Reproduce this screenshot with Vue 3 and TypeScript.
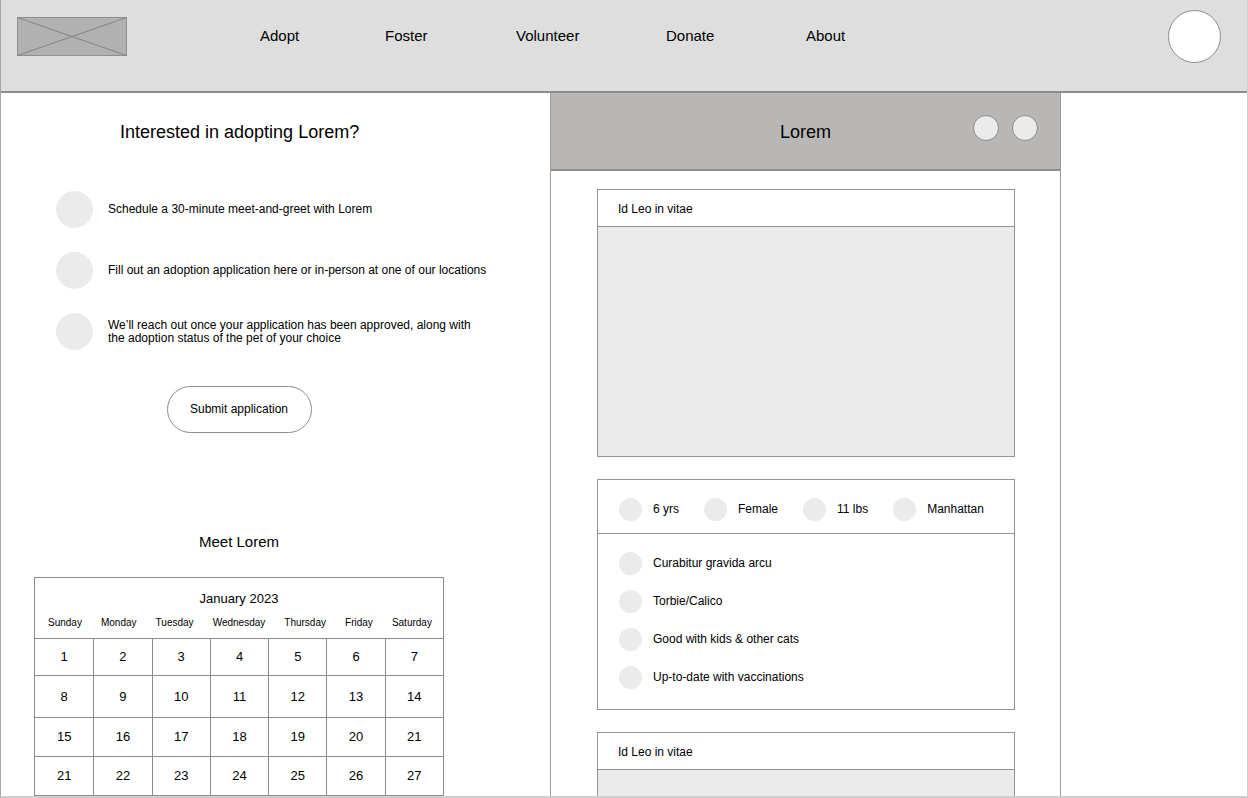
<script setup lang="ts">
interface Step {
  id: number
  text: string
}

interface Week {
  size: string
  days: number[]
}

const links: string[] = ['Adopt', 'Foster', 'Volunteer', 'Donate', 'About']

const steps: Step[] = [
  { id: 1, text: 'Schedule a 30-minute meet-and-greet with Lorem' },
  { id: 2, text: 'Fill out an adoption application here or in-person at one of our locations' },
  {
    id: 3,
    text: 'We’ll reach out once your application has been approved, along with\nthe adoption status of the pet of your choice',
  },
]

const weekdays: string[] = ['Sunday', 'Monday', 'Tuesday', 'Wednesday', 'Thursday', 'Friday', 'Saturday']

const weeks: Week[] = [
  { size: 'short', days: [1, 2, 3, 4, 5, 6, 7] },
  { size: 'tall', days: [8, 9, 10, 11, 12, 13, 14] },
  { size: 'medium', days: [15, 16, 17, 18, 19, 20, 21] },
  { size: 'medium', days: [21, 22, 23, 24, 25, 26, 27] },
  { size: 'medium', days: [] },
]

const facts: string[] = ['6 yrs', 'Female', '11 lbs', 'Manhattan']

const traits: string[] = [
  'Curabitur gravida arcu',
  'Torbie/Calico',
  'Good with kids & other cats',
  'Up-to-date with vaccinations',
]
</script>

<template>
  <div class="page">
    <header class="topbar">
      <a href="#" class="logo" aria-label="Home">
        <svg viewBox="0 0 110 39" preserveAspectRatio="none" aria-hidden="true">
          <rect x="0.5" y="0.5" width="109" height="38" fill="#b1b1b1" stroke="#8f8f8f" />
          <path d="M0.5 0.5L109.5 38.5M0.5 38.5L109.5 0.5" fill="none" stroke="#858585" />
        </svg>
      </a>
      <nav class="links" aria-label="Main">
        <a v-for="link in links" :key="link" href="#">{{ link }}</a>
      </nav>
      <button type="button" class="avatar" aria-label="Account"></button>
    </header>

    <main class="columns">
      <section class="adopt">
        <h1>Interested in adopting Lorem?</h1>
        <ol class="steps">
          <li v-for="step in steps" :key="step.id">
            <span class="dot"></span>
            <span class="step-text">{{ step.text }}</span>
          </li>
        </ol>
        <div class="booking">
          <button type="button" class="submit">Submit application</button>
          <h2>Meet Lorem</h2>
          <table class="calendar">
            <caption>January 2023</caption>
            <thead>
              <tr>
                <th v-for="name in weekdays" :key="name" scope="col">{{ name }}</th>
              </tr>
            </thead>
            <tbody>
              <tr v-for="(week, w) in weeks" :key="w" :class="week.size">
                <td v-for="col in 7" :key="col">{{ week.days[col - 1] }}</td>
              </tr>
            </tbody>
          </table>
        </div>
      </section>

      <section class="profile">
        <header class="profile-head">
          <h2>Lorem</h2>
          <div class="actions">
            <button type="button" aria-label="Save"></button>
            <button type="button" aria-label="Share"></button>
          </div>
        </header>
        <div class="cards">
          <article class="card">
            <h3>Id Leo in vitae</h3>
            <div class="media"></div>
          </article>
          <article class="card">
            <ul class="facts">
              <li v-for="fact in facts" :key="fact"><span class="bullet"></span>{{ fact }}</li>
            </ul>
            <ul class="traits">
              <li v-for="trait in traits" :key="trait"><span class="bullet"></span>{{ trait }}</li>
            </ul>
          </article>
          <article class="card">
            <h3>Id Leo in vitae</h3>
            <div class="media"></div>
          </article>
        </div>
      </section>
    </main>
  </div>
</template>

<style>
body {
  margin: 0;
}
</style>

<style scoped>
.page {
  box-sizing: border-box;
  height: 100vh;
  display: flex;
  flex-direction: column;
  overflow: hidden;
  background: #fff;
  color: #000;
  border-left: 1px solid #a6a6a6;
  border-right: 1px solid #cfcfcf;
  border-bottom: 2px solid #cfcfcf;
  font: 12px/13px "Liberation Sans", Arial, sans-serif;
}

h1,
h2,
h3,
ul,
ol {
  margin: 0;
  padding: 0;
  font-weight: 400;
  list-style: none;
}

button {
  box-sizing: border-box;
  padding: 0;
  font: inherit;
  color: inherit;
  border: 1px solid #8c8c8c;
}

.topbar {
  flex: none;
  box-sizing: border-box;
  height: 93px;
  display: flex;
  align-items: flex-start;
  padding: 10px 26px 0 16px;
  background: #dedede;
  border-bottom: 2px solid #8c8c8c;
}

.logo {
  width: 110px;
  height: 39px;
  margin-top: 7px;
}

.logo svg {
  display: block;
  width: 100%;
  height: 100%;
}

.links {
  flex: 1;
  display: grid;
  grid-template-columns: 125px 131px 150px 140px auto;
  margin: 16px 0 0 133px;
}

.links a {
  justify-self: start;
  color: inherit;
  font-size: 15px;
  line-height: 20px;
  text-decoration: none;
}

.avatar {
  width: 53px;
  height: 53px;
  border-radius: 50%;
  background: #fff;
}

.columns {
  flex: 1;
  min-height: 0;
  display: grid;
  grid-template-columns: 549fr 511fr 186fr;
}

.adopt {
  min-width: 0;
  padding-left: 33px;
}

.adopt h1 {
  margin: 28px 0 0 86px;
  font-size: 18px;
  line-height: 22px;
}

.steps {
  display: grid;
  gap: 24px;
  margin: 48px 0 0 22px;
}

.steps li {
  display: flex;
  align-items: center;
  gap: 15px;
}

.dot {
  flex: none;
  width: 37px;
  height: 37px;
  border-radius: 50%;
  background: #ebebeb;
}

.step-text {
  white-space: pre-line;
}

.booking {
  width: 410px;
  max-width: 100%;
  display: flex;
  flex-direction: column;
  align-items: center;
}

.submit {
  width: 145px;
  height: 47px;
  margin-top: 36px;
  border-radius: 24px;
  background: #fff;
}

.booking h2 {
  margin-top: 99px;
  font-size: 15px;
  line-height: 20px;
}

.calendar {
  box-sizing: border-box;
  display: block;
  width: 100%;
  margin-top: 25px;
  border: 1px solid #8c8c8c;
}

.calendar caption {
  display: block;
  padding-top: 12px;
  font-size: 13px;
  line-height: 18px;
}

.calendar thead,
.calendar tbody {
  display: block;
}

.calendar thead tr {
  display: flex;
  justify-content: space-between;
  padding: 8px 11px 9px 13px;
}

.calendar th {
  padding: 0;
  font-size: 10px;
  line-height: 13px;
  font-weight: 400;
}

.calendar tbody tr {
  display: grid;
  grid-template-columns: repeat(7, 1fr);
  border-top: 1px solid #8c8c8c;
}

.calendar td {
  display: flex;
  align-items: center;
  justify-content: center;
  padding: 0;
  font-size: 13px;
  line-height: 18px;
}

.calendar td + td {
  border-left: 1px solid #8c8c8c;
}

.short td {
  height: 36px;
}

.medium td {
  height: 38px;
}

.tall td {
  height: 41px;
}

.profile {
  min-width: 0;
  border-left: 1px solid #9c9c9c;
  border-right: 1px solid #9c9c9c;
}

.profile-head {
  box-sizing: border-box;
  height: 78px;
  display: grid;
  grid-template-columns: 1fr auto 1fr;
  align-items: start;
  padding: 22px 22px 0;
  background: #b8b7b5;
  border-bottom: 2px solid #8f8f8e;
}

.profile-head h2 {
  grid-column: 2;
  margin-top: 6px;
  font-size: 18px;
  line-height: 22px;
}

.actions {
  display: flex;
  justify-content: flex-end;
  gap: 13px;
}

.actions button {
  width: 26px;
  height: 26px;
  border-radius: 50%;
  background: #ebebeb;
}

.cards {
  display: grid;
  gap: 22px;
  padding: 18px 45px 0 46px;
}

.card {
  border: 1px solid #949494;
}

.card h3 {
  padding: 13px 20px 10px;
  font-size: 12px;
  line-height: 13px;
}

.media {
  height: 229px;
  background: #ebebeb;
  border-top: 1px solid #949494;
}

.card li {
  display: flex;
  align-items: center;
  gap: 11px;
  white-space: nowrap;
}

.bullet {
  flex: none;
  width: 23px;
  height: 23px;
  border-radius: 50%;
  background: #ebebeb;
}

.facts {
  display: flex;
  gap: 25px;
  padding: 18px 21px 12px;
  border-bottom: 1px solid #949494;
}

.traits {
  display: grid;
  gap: 15px;
  padding: 18px 21px 20px;
}
</style>
